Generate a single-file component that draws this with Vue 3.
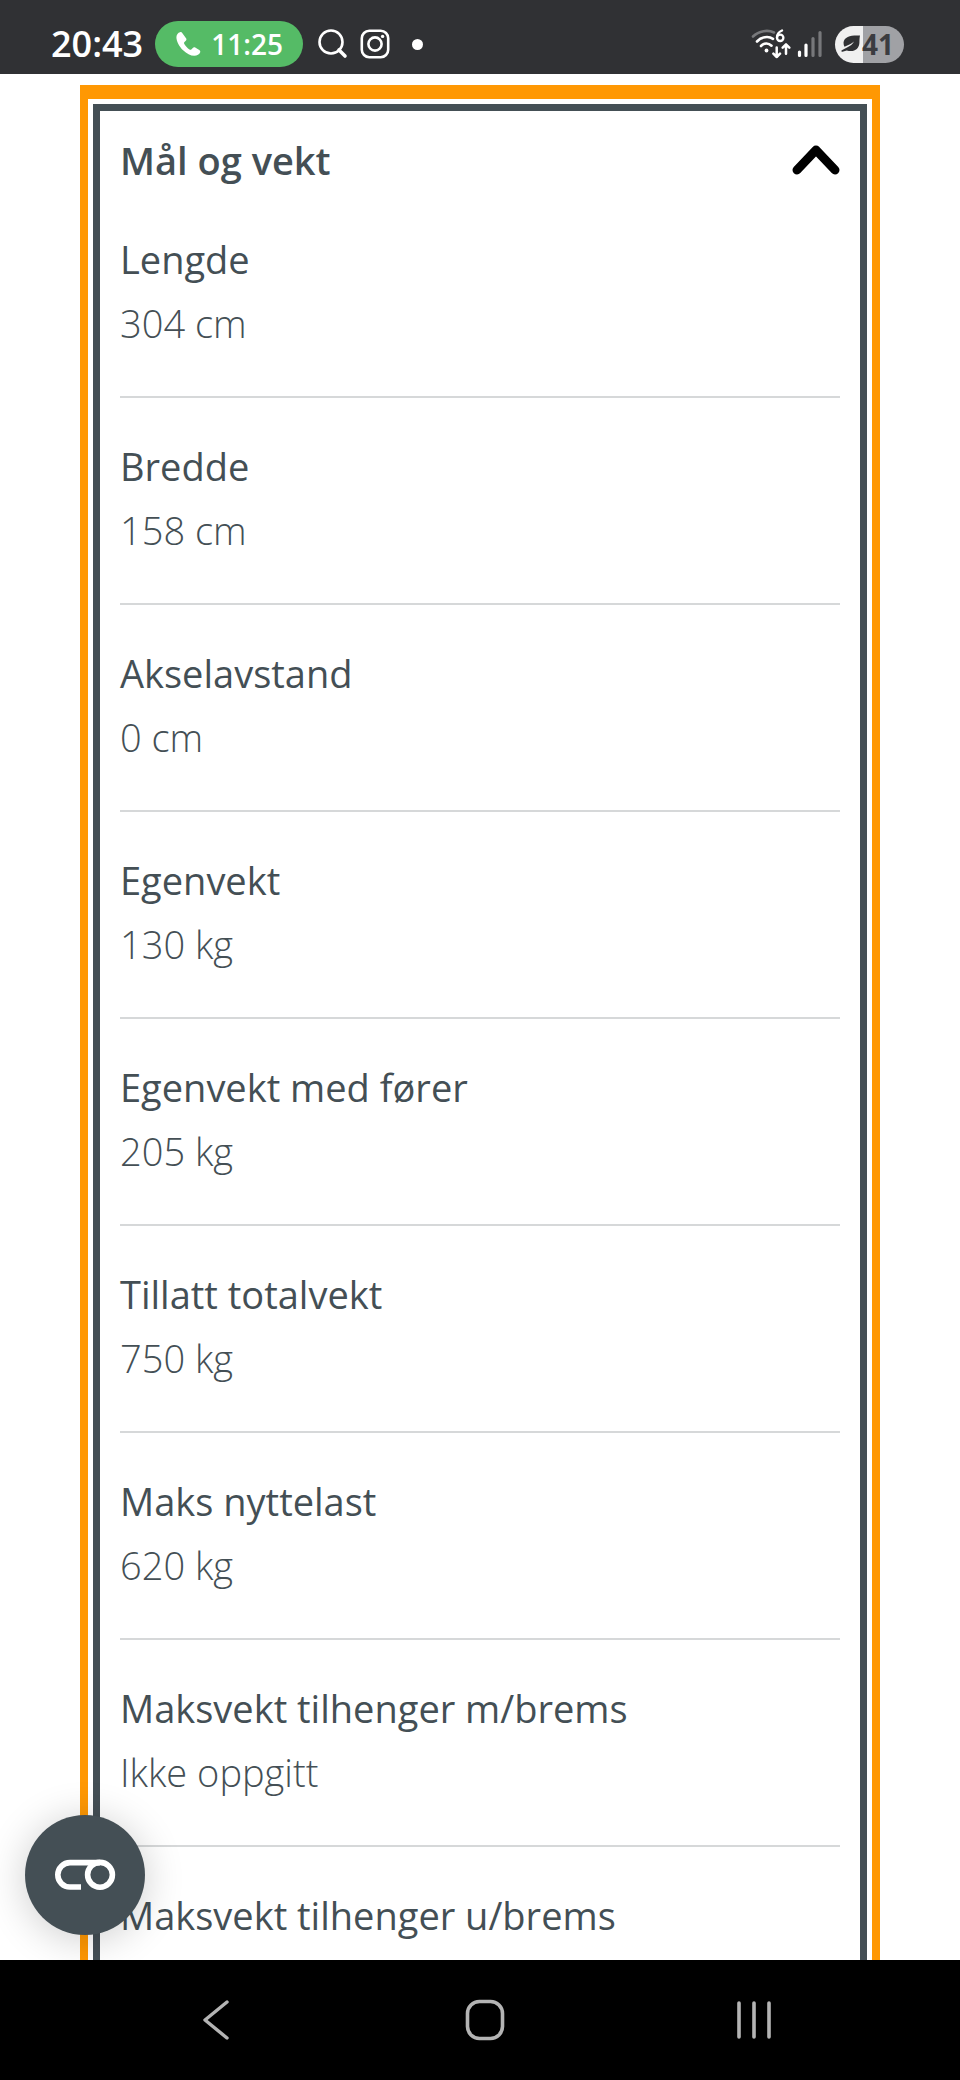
<script setup>
import { ref } from 'vue'

const open = ref(true)
const specs = [
  { label: 'Lengde', value: '304 cm' },
  { label: 'Bredde', value: '158 cm' },
  { label: 'Akselavstand', value: '0 cm' },
  { label: 'Egenvekt', value: '130 kg' },
  { label: 'Egenvekt med fører', value: '205 kg' },
  { label: 'Tillatt totalvekt', value: '750 kg' },
  { label: 'Maks nyttelast', value: '620 kg' },
  { label: 'Maksvekt tilhenger m/brems', value: 'Ikke oppgitt' },
  { label: 'Maksvekt tilhenger u/brems' },
]
</script>

<template>
  <div class="screen">
    <header class="status">
      <div class="status-group">
        <span class="clock">20:43</span>
        <button class="call" type="button" aria-label="Pågående samtale 11:25">
          <svg width="26" height="26" viewBox="0 0 26 26" aria-hidden="true">
            <path d="M5 1.2C3.1 1.6 1.4 3.7 1.4 6.2c0 4.2 3 9.400 6.700 13.100 3.600 3.500 7.300 5.500 11.200 5.500 2.700 0 5.200-1.400 5.900-3.500.3-1-.1-1.700-.9-2.200l-4.100-2.500c-.9-.5-1.700-.4-2.400.3l-1.500 1.500c-.6.6-1.100.6-1.800.1-1.900-1.300-4-3.500-5.200-5.600-.4-.7-.4-1.200.2-1.800l1.300-1.300c.7-.7.8-1.500.4-2.300L7.400 2.300C6.800 1.300 6.100.9 5 1.200z" fill="#fff" />
          </svg>
          <span>11:25</span>
        </button>
        <div class="notices">
          <svg width="30" height="30" viewBox="0 0 30 30" fill="none" stroke="#fff" aria-hidden="true">
            <circle cx="13" cy="13" r="11.500" stroke-width="2.600" />
            <path d="M21 21l6 6" stroke-width="3.600" stroke-linecap="round" />
          </svg>
          <svg width="30" height="30" viewBox="0 0 30 30" fill="none" stroke="#fff" stroke-width="2.600" aria-hidden="true">
            <rect x="1.800" y="1.800" width="26.400" height="26.400" rx="7.500" />
            <circle cx="15" cy="15" r="6.600" />
            <circle cx="22.600" cy="7.400" r="1.700" fill="#fff" stroke="none" />
          </svg>
          <i class="dot"></i>
        </div>
      </div>
      <div class="status-group">
        <svg width="40" height="30" viewBox="0 0 40 30" fill="none" stroke="#fff" stroke-linecap="round" aria-hidden="true">
          <path d="M2 7.500C8 1.600 17 .600 23 3.500" stroke="#77787b" stroke-width="2.600" />
          <path d="M6 12.500C10.500 7.600 17.500 6.800 22 9.800" stroke-width="2.600" />
          <path d="M10 17c3-3.200 7.500-3.200 10.500-.3" stroke-width="2.600" />
          <circle cx="15.500" cy="21.500" r="1.900" fill="#fff" stroke="none" />
          <path d="M31 1.500C27.500 3 25.800 6 26 9" stroke-width="2.300" />
          <circle cx="29.200" cy="8.800" r="3.200" stroke-width="2.300" />
          <path d="M25.700 18.500v9.500m-3.300-3.300 3.300 3.300 3.300-3.300M35 24.800v-9.300m-3.300 3.200 3.300-3.300 3.300 3.300" stroke-width="2.500" stroke-linejoin="round" />
        </svg>
        <svg class="signal" width="26" height="28" viewBox="0 0 26 28" stroke-width="3.200" stroke-linecap="round" aria-hidden="true">
          <path d="M2.500 22v3.500M9 15v10.500" stroke="#fff" />
          <path d="M16 8.500v17M23 2.500v23" stroke="#77787b" />
        </svg>
        <div class="battery">
          <svg width="20" height="20" viewBox="0 0 20 20" aria-hidden="true">
            <path d="M19 1.500C10 1 3.500 2.500 2.600 8c-.2 1.900.1 3.500.9 4.800L9 10.200c1.500-.8 2.800-1.600 4-2.700-1.200 2.700-3.800 4.500-7 6L.8 16.200c-.9.6-.5 1.800.7 1.500l4.200-1.300c7 2.300 12.300-1.100 12.700-7.400.1-2.800.1-5.300.6-7.500z" fill="#303134" />
          </svg>
          <span>41</span>
        </div>
      </div>
    </header>

    <main class="page">
      <div class="outer">
        <section class="card">
          <h2 class="heading">
            <button class="toggle" type="button" :aria-expanded="open" aria-controls="specs" @click="open = !open">
              <span>Mål og vekt</span>
              <svg :class="{ flipped: !open }" width="48" height="32" viewBox="0 0 48 32" aria-hidden="true">
                <path d="M5 26 24 6l19 20" fill="none" stroke="#000" stroke-width="9" stroke-linecap="round" stroke-linejoin="round" />
              </svg>
            </button>
          </h2>
          <dl v-show="open" id="specs" class="specs">
            <div v-for="s in specs" :key="s.label" class="row">
              <dt>{{ s.label }}</dt>
              <dd v-if="s.value">{{ s.value }}</dd>
            </div>
          </dl>
        </section>
      </div>
      <button class="fab" type="button" aria-label="Innstillinger for informasjonskapsler">
        <svg width="62" height="32" viewBox="0 0 62 32" fill="none" stroke="#fff" stroke-width="5.600" aria-hidden="true">
          <path d="M27 28H16A12.200 12.200 0 0 1 16 3.600H46" />
          <circle cx="46" cy="15.800" r="12.400" />
        </svg>
      </button>
    </main>

    <nav class="navbar" aria-label="Systemnavigasjon">
      <button type="button" aria-label="Tilbake">
        <svg width="28" height="42" viewBox="0 0 28 42" fill="none" stroke="#b4b4b4" stroke-width="3.400" stroke-linecap="round" stroke-linejoin="round" aria-hidden="true">
          <path d="M25 3 3 21l22 18" />
        </svg>
      </button>
      <button type="button" aria-label="Hjem">
        <svg width="40" height="42" viewBox="0 0 40 42" fill="none" stroke="#b4b4b4" stroke-width="3.600" aria-hidden="true">
          <rect x="2.500" y="2.500" width="35" height="37" rx="12" />
        </svg>
      </button>
      <button type="button" aria-label="Nylige apper">
        <svg width="36" height="40" viewBox="0 0 36 40" stroke="#b4b4b4" stroke-width="3.600" stroke-linecap="round" aria-hidden="true">
          <path d="M3 3v34M18 3v34M33 3v34" />
        </svg>
      </button>
    </nav>
  </div>
</template>

<style>
body {
  margin: 0;
  background: #fff;
}
</style>

<style scoped>
.screen {
  display: flex;
  flex-direction: column;
  height: 100vh;
  font-family: "Open Sans", "Noto Sans", sans-serif;
  color: #444f55;
}
button {
  margin: 0;
  padding: 0;
  border: 0;
  background: none;
  font: inherit;
  color: inherit;
  cursor: pointer;
}
svg {
  display: block;
  flex: none;
}

.status {
  display: flex;
  flex: none;
  justify-content: space-between;
  box-sizing: border-box;
  height: 74px;
  padding: 16px 56px 0 51px;
  background: #303134;
  color: #fff;
}
.status-group {
  display: flex;
  align-items: center;
  height: 56px;
}
.clock {
  font-size: 36px;
  line-height: 48px;
  font-weight: 600;
}
.call {
  display: flex;
  align-items: center;
  gap: 10px;
  height: 46px;
  margin-left: 12px;
  padding: 0 20px;
  border-radius: 24px;
  background: #55bb66;
  font-size: 28px;
  font-weight: 600;
}
.notices {
  display: flex;
  align-items: center;
  gap: 12px;
  margin-left: 15px;
}
.dot {
  width: 11px;
  height: 11px;
  margin-left: 10px;
  border-radius: 50%;
  background: #fff;
}
.signal {
  margin: 0 12px 0 6px;
}
.battery {
  display: flex;
  align-items: center;
  gap: 1px;
  box-sizing: border-box;
  height: 37px;
  padding: 0 10px 0 6px;
  border-radius: 19px;
  background: linear-gradient(90deg, #f0f0f0 28px, #a0a1a5 28px);
  color: #3b3c40;
  font-size: 28px;
  font-weight: 700;
}

.page {
  position: relative;
  flex: 1;
  min-height: 0;
  overflow: hidden;
  padding: 11px 80px 0;
}
.outer {
  padding: 5px 5px 0;
  border: 8px solid #ff9803;
  border-width: 14px 8px;
}
.card {
  min-height: 100vh;
  padding: 0 20px;
  border: 7px solid #444f55;
}
.heading {
  margin: 0;
  font-size: 38px;
  line-height: 56px;
  font-weight: 600;
}
.toggle {
  display: flex;
  align-items: center;
  justify-content: space-between;
  width: 100%;
  padding: 21px 0 23px;
  text-align: left;
}
.flipped {
  transform: rotate(180deg);
}
.specs {
  margin: 0;
}
.row {
  padding: 36px 0 41px;
  border-bottom: 2px solid #d6d8d9;
}
.row:first-child {
  padding-top: 16px;
}
.row:last-child {
  border-bottom: 0;
}
dt,
dd {
  margin: 0;
  font-size: 38px;
  line-height: 64px;
}
dt {
  font-weight: 400;
}
dd {
  font-weight: 300;
}

.fab {
  position: absolute;
  left: 25px;
  bottom: 25px;
  display: flex;
  align-items: center;
  justify-content: center;
  width: 120px;
  height: 120px;
  border-radius: 50%;
  background: #444f55;
  box-shadow: 0 4px 40px rgba(0, 0, 0, 0.2);
}

.navbar {
  display: flex;
  flex: none;
  align-items: center;
  justify-content: space-around;
  height: 120px;
  padding: 0 72px 0 81px;
  background: #000;
}
.navbar button {
  display: flex;
  align-items: center;
  justify-content: center;
  width: 96px;
  height: 96px;
}
</style>
